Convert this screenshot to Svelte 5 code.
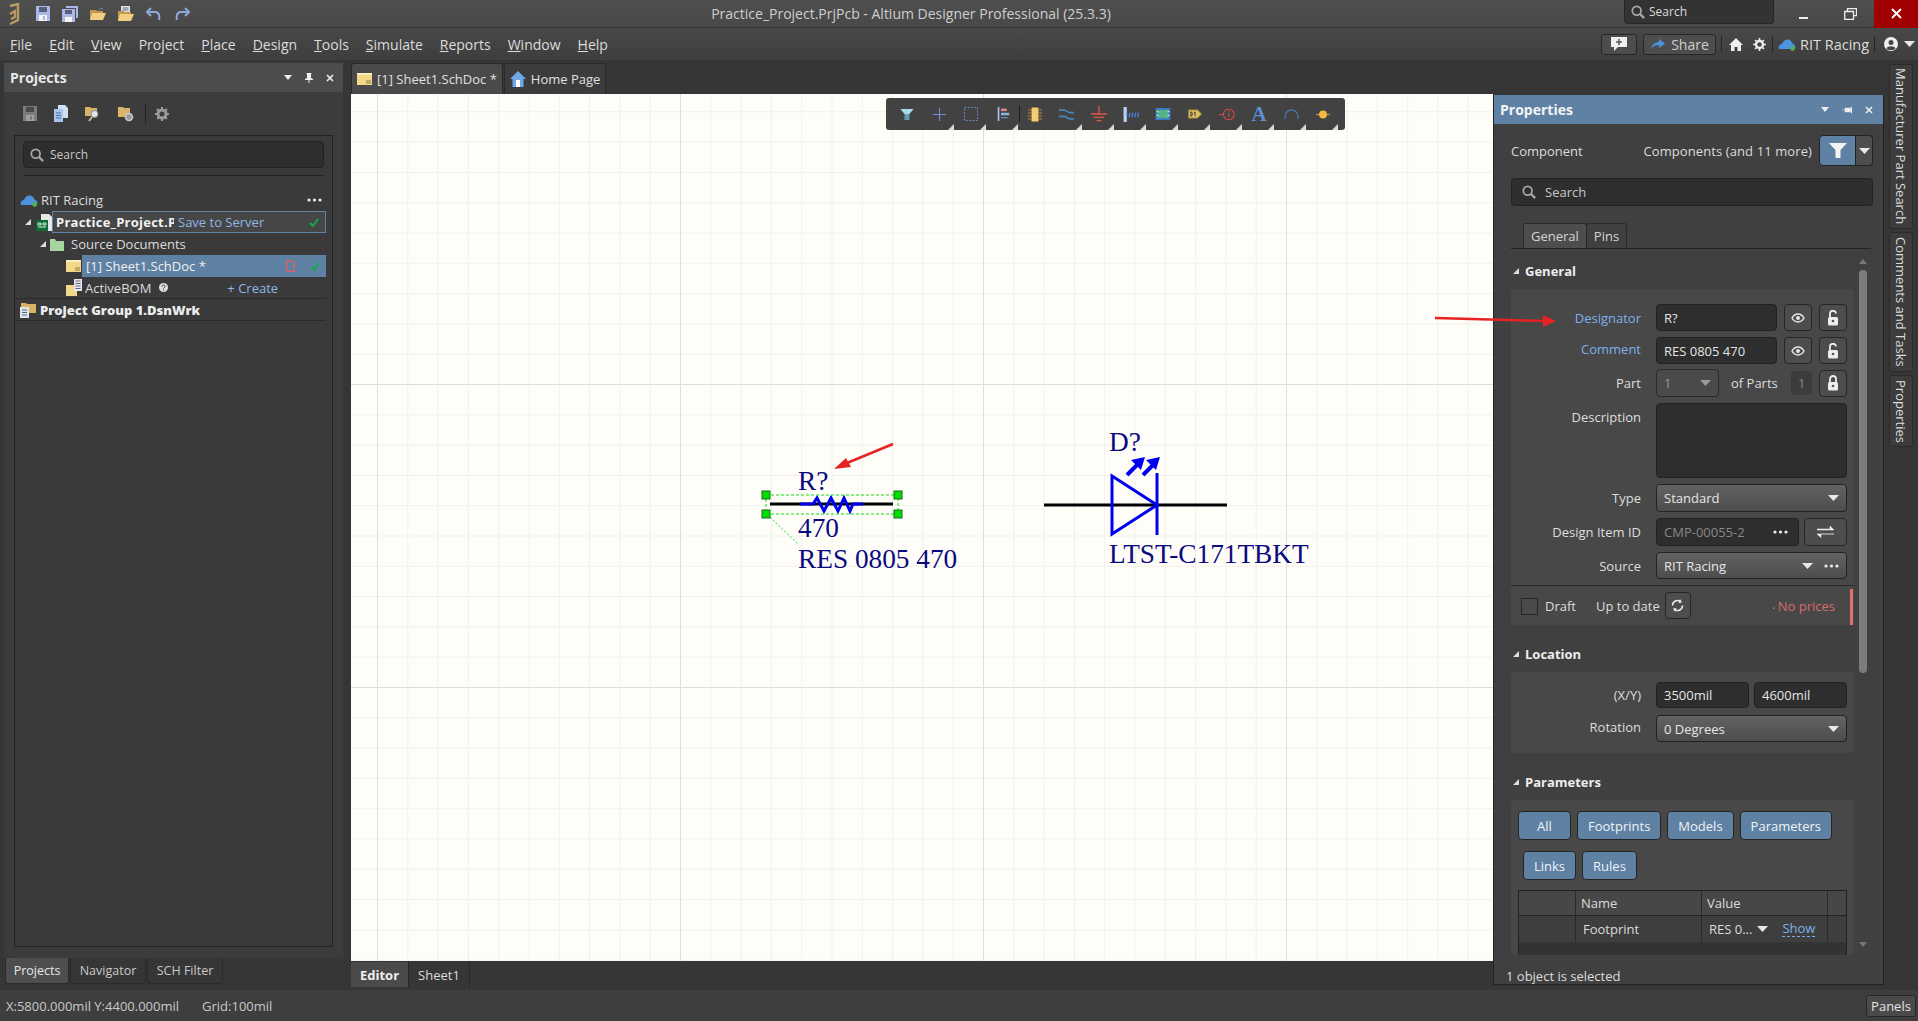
<script>
  const menus = [
    ["F", "ile"], ["E", "dit"], ["V", "iew"], ["", "Project"], ["P", "lace"], ["D", "esign"],
    ["T", "ools"], ["S", "imulate"], ["R", "eports"], ["W", "indow"], ["H", "elp"],
  ];
  const sideTabs = ["Manufacturer Part Search", "Comments and Tasks", "Properties"];
  const paramsRow1 = ["All", "Footprints", "Models", "Parameters"];
  const paramsRow2 = ["Links", "Rules"];
</script>

{#snippet caret()}
  <svg class="caret" width="11" height="6" viewBox="0 0 11 6"><path d="M0 0h11L5.5 6z" fill="#e8e8e8" /></svg>
{/snippet}

{#snippet tri()}
  <svg class="tri" width="6" height="6" viewBox="0 0 6 6"><path d="M0 6L6 0v6z" fill="#dcdcdc" /></svg>
{/snippet}

{#snippet check()}
  <svg width="10" height="9" viewBox="0 0 10 9"><path d="M1 5l3 3 5-7" fill="none" stroke="#12a84e" stroke-width="2" /></svg>
{/snippet}

{#snippet mag(size)}
  <svg width={size} height={size} viewBox="0 0 16 16"><circle cx="6.5" cy="6.5" r="5" fill="none" stroke="#a8a8a8" stroke-width="2" /><path d="M10 10l5 5" stroke="#a8a8a8" stroke-width="2.6" /></svg>
{/snippet}

{#snippet eye()}
  <svg width="14" height="10" viewBox="0 0 14 10"><path d="M1 5c3-5.300 9-5.300 12 0-3 5.300-9 5.300-12 0z" fill="none" stroke="#e6e6e6" stroke-width="1.500" /><circle cx="7" cy="5" r="2" fill="#e6e6e6" /></svg>
{/snippet}

{#snippet lock(open)}
  <svg width="12" height="16" viewBox="0 0 12 16">
    <path d={open ? "M3 7V4a3 3 0 0 1 6-.5" : "M3 7V4a3 3 0 0 1 6 0v3"} fill="none" stroke="#eee" stroke-width="1.800" />
    <rect x="1" y="7" width="10" height="8.500" rx="1.500" fill="#eee" /><circle cx="6" cy="11" r="1.300" fill="#555" />
  </svg>
{/snippet}

{#snippet dots()}
  <svg width="15" height="4" viewBox="0 0 15 4"><circle cx="2" cy="2" r="1.600" fill="#eee" /><circle cx="7.500" cy="2" r="1.600" fill="#eee" /><circle cx="13" cy="2" r="1.600" fill="#eee" /></svg>
{/snippet}

{#snippet cloud()}
  <svg width="18" height="14" viewBox="0 0 18 14"><path d="M1 12c-1-3 1-5 3-5 1-4 6-6 9-3 1 1 2 3 2 3 2 0 3 3 2 5z" fill="#4b93e0" /><circle cx="14.500" cy="11.500" r="2.400" fill="#4fb04f" /></svg>
{/snippet}

{#snippet schFile()}
  <svg width="15" height="12" viewBox="0 0 15 12"><rect width="15" height="12" fill="#f2d98a" /><rect width="15" height="2" fill="#fbeec0" /><path d="M9 8h5M9 10h5" stroke="#8d7a3d" /></svg>
{/snippet}

{#snippet floppy(color, fade, paper)}
  <svg width="14" height="15" viewBox="0 0 14 15"><path d="M0 0h14v15H0z" fill={color} /><rect x="3" y="1" width="8" height="5" fill={fade} /><rect x="3" y="9" width="8" height="6" fill={paper} /><rect x="7" y="10" width="2" height="4" fill={color} /></svg>
{/snippet}

{#snippet folder()}
  <svg width="16" height="14" viewBox="0 0 16 14"><path d="M0 3h6l1 1h6v9H0z" fill="#c49a4a" /><path d="M2 6h14l-3 7H0z" fill="#f0cf80" /><path d="M9 3c1-2 3-2 4-1" fill="none" stroke="#9fb8e0" stroke-dasharray="1.500 1" /></svg>
{/snippet}

<div class="app">
  <header class="titlebar">
    <div class="title-left">
      <svg class="logo" width="14" height="22" viewBox="0 0 14 22"><path d="M3 3l8-2v16l-8 4M3 11l5-3v6l-4 2" fill="none" stroke="#b59a62" stroke-width="2.400" /></svg>
      <span class="t-icon">{@render floppy("#a9b8e8", "#59607e", "#f4f4f4")}</span>
      <svg class="t-icon" width="16" height="16" viewBox="0 0 16 16"><path d="M4 0h12v12h-2V2H4z" fill="#a9b8e8" /><path d="M0 3h13v13H0z" fill="#a9b8e8" /><rect x="3" y="4" width="7" height="4" fill="#59607e" /><rect x="3" y="11" width="7" height="5" fill="#f4f4f4" /></svg>
      <span class="t-icon">{@render folder()}</span>
      <svg class="t-icon" width="16" height="16" viewBox="0 0 16 16"><path d="M3 0h9v9H3z" fill="#dfe5f0" /><path d="M4.500 2h6M4.500 4h6" stroke="#667" /><path d="M0 5h6l1 1h6v9H0z" fill="#c49a4a" /><path d="M2 8h14l-3 7H0z" fill="#f0cf80" /></svg>
      <svg class="t-icon" width="16" height="14" viewBox="0 0 16 14"><path d="M5 1L1 5l4 4M1 5h8c4 0 5 4 4 8" fill="none" stroke="#8fa9dc" stroke-width="2" /></svg>
      <svg class="t-icon" width="16" height="14" viewBox="0 0 16 14"><path d="M11 1l4 4-4 4M15 5H7c-4 0-5 4-4 8" fill="none" stroke="#8fa9dc" stroke-width="2" /></svg>
    </div>
    <div class="title-text">Practice_Project.PrjPcb - Altium Designer Professional (25.3.3)</div>
    <div class="title-search">{@render mag(14)}<span>Search</span></div>
    <div class="win-btn"><svg width="10" height="10" viewBox="0 0 10 10"><rect y="8" width="9" height="2" fill="#eee" /></svg></div>
    <div class="win-btn"><svg width="13" height="12" viewBox="0 0 13 12"><path d="M3.500 3V.7h9v7H9.500M.7 3.500h8.800v7.800H.7z" fill="none" stroke="#eee" stroke-width="1.300" /></svg></div>
    <div class="win-btn close"><svg width="11" height="11" viewBox="0 0 11 11"><path d="M1 1l9 9M10 1l-9 9" stroke="#fff" stroke-width="1.800" /></svg></div>
  </header>

  <nav class="menubar">
    <div class="menus">
      {#each menus as [u, rest]}
        <span class="menu-item"><u>{u}</u>{rest}</span>
      {/each}
    </div>
    <div class="menu-right">
      <button class="mini msg"><svg width="16" height="14" viewBox="0 0 16 14"><path d="M0 0h16v10H7l-4 4v-4H0z" fill="#f0f0f0" /><path d="M8 2v6M5 5h6" stroke="#555" stroke-width="1.500" /></svg></button>
      <button class="mini share"><svg width="16" height="11" viewBox="0 0 16 11"><path d="M9 0l6 4.500L9 9V6C5 6 3 7 1 10c1-4 3-6.500 8-7z" fill="#4b93e0" /></svg>Share</button>
      <i class="vsep"></i>
      <svg class="home" width="14" height="13" viewBox="0 0 14 13"><path d="M7 0l7 7h-2v6H8.500V9h-3v4H2V7H0z" fill="#f0f0f0" /></svg>
      <svg class="gear" width="13" height="13" viewBox="0 0 13 13"><circle cx="6.500" cy="6.500" r="3.500" fill="none" stroke="#eee" stroke-width="2.400" /><path d="M6.500 0v13M0 6.500h13M2 2l9 9M11 2l-9 9" stroke="#eee" stroke-width="1.600" stroke-dasharray="2.200 8.600 2.200" /></svg>
      <i class="vsep"></i>
      <span class="cloud-top">{@render cloud()}</span>
      <span class="rit">RIT Racing</span>
      <i class="vsep"></i>
      <svg class="user" width="14" height="14" viewBox="0 0 14 14"><circle cx="7" cy="7" r="7" fill="#eee" /><circle cx="7" cy="5.500" r="2.500" fill="#444" /><path d="M2.500 11.500c1-3 8-3 9 0-2 2-7 2-9 0z" fill="#444" /></svg>
      {@render caret()}
    </div>
  </nav>

  <div class="main">
    <aside class="left">
      <div class="panel-head">
        <b>Projects</b>
        <span class="head-icons">
          <svg width="8" height="5" viewBox="0 0 8 5"><path d="M0 0h8L4 5z" fill="#eee" /></svg>
          <svg width="8" height="10" viewBox="0 0 8 10"><path d="M1.500 0h5v1H6v4l2 1v1H4.500v3h-1V7H0V6l2-1V1h-.5z" fill="#eee" /></svg>
          <svg width="8" height="8" viewBox="0 0 8 8"><path d="M1 1l6 6M7 1L1 7" stroke="#eee" stroke-width="1.600" /></svg>
        </span>
      </div>
      <div class="panel-tools">
        {@render floppy("#7c7c7c", "#4a4a4a", "#a0a0a0")}
        <svg width="14" height="17" viewBox="0 0 14 17"><path d="M4 0h7l3 3v10H4z" fill="#cfe0f5" /><path d="M0 4h9v13H0z" fill="#a9c4ea" /><path d="M2 8h5M2 10.500h5M2 13h5" stroke="#3d6aa8" /></svg>
        <svg width="16" height="16" viewBox="0 0 16 16"><path d="M0 1h5l1 1h6v8H0z" fill="#d9b368" /><circle cx="9.500" cy="8" r="3.500" fill="#dfe5ea" stroke="#888" /><path d="M7 11l-3 4" stroke="#c9b48a" stroke-width="2" /></svg>
        <svg width="16" height="16" viewBox="0 0 16 16"><path d="M0 1h5l1 1h6v9H0z" fill="#d9b368" /><circle cx="11" cy="11" r="3.500" fill="#999" stroke="#ccc" stroke-width="1.500" /></svg>
        <i class="tool-sep"></i>
        <svg width="14" height="14" viewBox="0 0 14 14"><circle cx="7" cy="7" r="4" fill="none" stroke="#9a9a9a" stroke-width="3" /><path d="M7 0v14M0 7h14M2 2l10 10M12 2L2 12" stroke="#9a9a9a" stroke-width="2" stroke-dasharray="2 10 2" /></svg>
      </div>
      <div class="tree-box">
        <div class="search left-search">{@render mag(14)}<span>Search</span></div>
        <div class="tree-sep"></div>
        <div class="row rit-row">
          {@render cloud()}
          <span class="row-text">RIT Racing</span>
          <span class="row-end">{@render dots()}</span>
        </div>
        <div class="row proj-row">
          <svg class="exp" width="6" height="6" viewBox="0 0 6 6"><path d="M0 6L6 0v6z" fill="#ddd" /></svg>
          <svg class="proj-icon" width="16" height="17" viewBox="0 0 16 17"><path d="M5 0h8l3 3v14H5z" fill="#e8e8e8" /><rect y="6" width="12" height="11" fill="#0d6b3a" /><path d="M2 9h3v2H2zM7 9h3v2H7zM2 13h8" stroke="#d8f0d8" fill="none" /></svg>
          <div class="proj-box">
            <b class="proj-name">Practice_Project.PrjPcb</b>
            <span class="save">Save to Server</span>
            <span class="row-end">{@render check()}</span>
          </div>
        </div>
        <div class="row src-row">
          <svg class="exp" width="6" height="6" viewBox="0 0 6 6"><path d="M0 6L6 0v6z" fill="#ddd" /></svg>
          <svg width="14" height="13" viewBox="0 0 14 13"><path d="M0 1h5l1 2h8v10H0z" fill="#a8d4a0" /></svg>
          <span class="row-text">Source Documents</span>
        </div>
        <div class="row sheet-row">
          {@render schFile()}
          <div class="sheet-box">
            <span>[1] Sheet1.SchDoc *</span>
            <svg class="red-doc" width="9" height="12" viewBox="0 0 9 12"><path d="M.7.700h5l2.600 2.600v8H.7z" fill="none" stroke="#e06060" stroke-width="1.300" /></svg>
            <span class="row-end">{@render check()}</span>
          </div>
        </div>
        <div class="row bom-row">
          <svg width="16" height="17" viewBox="0 0 16 17"><rect y="6" width="11" height="11" fill="#f2d98a" /><rect x="8" width="8" height="12" fill="#e8e8f4" /><path d="M9.500 2h5M9.500 4.500h5M9.500 7h5M9.500 9.500h5" stroke="#667" /></svg>
          <span class="row-text">ActiveBOM</span>
          <svg class="help" width="9" height="9" viewBox="0 0 9 9"><circle cx="4.500" cy="4.500" r="4.500" fill="#ddd" /><path d="M3 3.500c0-2 3-2 3 0 0 1-1.500 1-1.500 2M4.500 6.500v1" stroke="#333" fill="none" /></svg>
          <span class="create">+ Create</span>
        </div>
        <div class="row group-row">
          <svg width="17" height="17" viewBox="0 0 17 17"><path d="M1 2h5l1 1h9v9H1z" fill="#d9b368" /><rect y="6" width="9" height="11" fill="#dfe6ee" /><path d="M2 9h5M2 11.500h5M2 14h5" stroke="#567" /></svg>
          <b class="row-text">Project Group 1.DsnWrk</b>
        </div>
      </div>
      <div class="left-tabs">
        <span class="ltab on">Projects</span>
        <span class="ltab">Navigator</span>
        <span class="ltab">SCH Filter</span>
      </div>
    </aside>

    <section class="editor">
      <div class="doc-tabs">
        <span class="doc-tab first">{@render schFile()}[1] Sheet1.SchDoc *</span>
        <span class="doc-tab">
          <svg width="16" height="16" viewBox="0 0 16 16"><path d="M8 0l8 8h-2.500v8h-11V8H0z" fill="#6fa8e8" /><rect x="6" y="9" width="4" height="7" fill="#fff" /></svg>
          Home Page
        </span>
      </div>

      <div class="canvas">
        <svg class="sheet" width="1142" height="867" viewBox="351 94 1142 867">
          <defs>
            <pattern id="minor" patternUnits="userSpaceOnUse" x="377" y="81" width="30.3" height="30.3">
              <path d="M.5 0v30.300M0 .5h30.300" stroke="#f1f0ea" fill="none" />
            </pattern>
            <pattern id="major" patternUnits="userSpaceOnUse" x="377" y="81" width="303" height="303">
              <path d="M.5 0v303M0 .5h303" stroke="#dfded8" fill="none" />
            </pattern>
          </defs>
          <rect x="351" y="94" width="1142" height="867" fill="#fffdf8" />
          <rect x="351" y="94" width="1142" height="867" fill="url(#minor)" />
          <rect x="351" y="94" width="1142" height="867" fill="url(#major)" />

          <path d="M770 504h123" stroke="#000" stroke-width="3" />
          <path d="M800 504h13l4-6 7 13 7-13 7 13 6-13 6 13 3-7h10" fill="none" stroke="#0000f0" stroke-width="3" />
          <rect x="766" y="495" width="132" height="19" fill="none" stroke="#11dd11" stroke-dasharray="3 2" />
          <path d="M770 517l29 28" stroke="#11dd11" stroke-dasharray="2 2" />
          <g fill="#00e000" stroke="#1a6a1a">
            <rect x="762" y="491" width="8" height="8" />
            <rect x="894" y="491" width="8" height="8" />
            <rect x="762" y="510" width="8" height="8" />
            <rect x="894" y="510" width="8" height="8" />
          </g>
          <g class="sch-text">
            <text x="798" y="490">R?</text>
            <text x="798" y="537">470</text>
            <text x="798" y="568">RES 0805 470</text>
            <text x="1109" y="451">D?</text>
            <text x="1109" y="563">LTST-C171TBKT</text>
          </g>
          <path d="M1044 505h113M1157 505h70" stroke="#000" stroke-width="3" />
          <path d="M1112 476v58l45-29zM1157 473v62" fill="none" stroke="#0000f0" stroke-width="3" />
          <path d="M1127 475l11-11M1143 475l11-11" stroke="#0000f0" stroke-width="4" />
          <path d="M1145 457l-14 3 10 10zM1160 457l-14 3 10 10z" fill="#0000f0" />
          <path d="M893 444l-46 19" stroke="#e62222" stroke-width="2.500" />
          <path d="M834 469l12-11 5 9z" fill="#e62222" />
        </svg>

        <div class="sch-tools">
          <span class="st">
            <svg width="14" height="11" viewBox="0 0 18 15"><path d="M0 0h18l-6 7v8H6V7z" fill="#a8dce8" /><path d="M6 7h6v8H6z" fill="#5e9fb0" /></svg>
          </span>
          <span class="st">
            <svg width="13" height="13" viewBox="0 0 18 18"><path d="M9 0v18M0 9h18" stroke="#6f8fcf" stroke-width="1.500" /></svg>{@render tri()}
          </span>
          <span class="st">
            <svg width="14" height="14" viewBox="0 0 15 15"><rect x=".5" y=".5" width="14" height="14" fill="none" stroke="#6f8fe0" stroke-dasharray="2 1.500" /></svg>{@render tri()}
          </span>
          <span class="st">
            <svg width="13" height="14" viewBox="0 0 14 17"><rect width="2" height="17" fill="#aac4ee" /><rect x="4" y="2" width="7" height="3" fill="#e68a8a" /><rect x="4" y="7" width="10" height="3" fill="#8ab4e6" /><path d="M4 13h8" stroke="#8ab4e6" /></svg>{@render tri()}
          </span>
          <i class="st-sep"></i>
          <span class="st">
            <svg width="14" height="15" viewBox="0 0 14 15"><path d="M0 3h14M0 6h14M0 9h14M0 12h14" stroke="#b08c42" stroke-width="1.200" /><rect x="3.500" y=".5" width="7" height="14" rx="1" fill="#f2cd74" stroke="#a8853e" /></svg>
          </span>
          <span class="st">
            <svg width="16" height="11" viewBox="0 0 18 12"><path d="M0 1h6l6 3h5M0 8h6l6 3h5" fill="none" stroke="#4a84ba" stroke-width="2" /></svg>{@render tri()}
          </span>
          <span class="st">
            <svg width="16" height="16" viewBox="0 0 17 17"><path d="M8.500 0v8M0 8.500h17M3 12h11M6 15.500h5" stroke="#e0544a" stroke-width="1.400" /></svg>{@render tri()}
          </span>
          <span class="st">
            <svg width="17" height="15" viewBox="0 0 17 16"><rect width="3.500" height="16" fill="#b7cff2" /><path d="M3 8h2M7 6l-1 5M10 6l-1 5M13 6l-1 5M16 6l-1 5" stroke="#4a7cd0" stroke-width="1.500" /></svg>{@render tri()}
          </span>
          <span class="st">
            <svg width="16" height="12" viewBox="0 0 16 13"><rect width="16" height="13" fill="#3f78c8" /><rect x="2" y="2" width="12" height="9" fill="#52b488" /><path d="M1 4h2M1 8h2M13 4h2M13 8h2" stroke="#fff" /></svg>{@render tri()}
          </span>
          <span class="st">
            <svg width="16" height="10" viewBox="0 0 16 12"><path d="M0 1h11l5 5-5 5H0z" fill="#d9bd64" stroke="#8a7433" /><path d="M3 3.500v5c2.500 0 2.500-5 0-5zM7 4.500l1-1v5" fill="none" stroke="#222" /></svg>{@render tri()}
          </span>
          <span class="st">
            <svg width="16" height="13" viewBox="0 0 18 14"><circle cx="11" cy="7" r="6" fill="none" stroke="#dc4a4a" stroke-width="1.200" /><path d="M0 7h5M11 5v5M11 3v1" stroke="#dc4a4a" stroke-width="1.200" /></svg>{@render tri()}
          </span>
          <span class="st"><span class="big-a">A</span>{@render tri()}</span>
          <span class="st">
            <svg width="15" height="10" viewBox="0 0 16 11"><path d="M1 11V8a7 7 0 0 1 14 0v3" fill="none" stroke="#4a7cb8" stroke-width="1.300" /></svg>{@render tri()}
          </span>
          <span class="st">
            <svg width="14" height="9" viewBox="0 0 16 10"><path d="M0 5h16" stroke="#c88a4a" stroke-width="1.500" /><circle cx="8" cy="5" r="4.500" fill="#f4b93e" /></svg>{@render tri()}
          </span>
        </div>
      </div>

      <div class="view-tabs">
        <span class="vtab on">Editor</span>
        <span class="vtab">Sheet1</span>
      </div>
    </section>

    <aside class="props">
      <div class="props-head">
        <b>Properties</b>
        <span class="head-icons">
          <svg width="8" height="5" viewBox="0 0 8 5"><path d="M0 0h8L4 5z" fill="#eee" /></svg>
          <svg width="10" height="8" viewBox="0 0 10 8"><path d="M0 4h3M3 2h5v1h1V1h1v6H9V5H8v1H3z" fill="#eee" stroke="#eee" stroke-width=".5" /></svg>
          <svg width="8" height="8" viewBox="0 0 8 8"><path d="M1 1l6 6M7 1L1 7" stroke="#eee" stroke-width="1.600" /></svg>
        </span>
      </div>

      <div class="props-body">
        <div class="comp-row">
          <span>Component</span>
          <span class="comp-more">Components (and 11 more)</span>
          <button class="filter-btn"><svg width="18" height="15" viewBox="0 0 18 15"><path d="M0 0h18l-6.500 7v8h-5V7z" fill="#f4f4f4" /></svg></button>
          <button class="filter-drop">{@render caret()}</button>
        </div>
        <div class="search props-search">{@render mag(14)}<span>Search</span></div>
        <div class="p-tabs">
          <span class="p-tab on">General</span>
          <span class="p-tab">Pins</span>
        </div>

        <div class="scroll-wrap">
          <div class="scroll-content">
            <div class="sec-head">
              <svg width="6" height="6" viewBox="0 0 6 6"><path d="M0 6L6 0v6z" fill="#ddd" /></svg>
              <b>General</b>
            </div>
            <div class="sec-box general">
              <div class="f-row h27">
                <label class="lnk">Designator</label>
                <div class="ctl"><span class="input grow">R?</span><button class="sq">{@render eye()}</button><button class="sq">{@render lock(true)}</button></div>
              </div>
              <div class="f-row h26">
                <label class="lnk raised">Comment</label>
                <div class="ctl"><span class="input grow">RES 0805 470</span><button class="sq">{@render eye()}</button><button class="sq">{@render lock(true)}</button></div>
              </div>
              <div class="f-row h28">
                <label>Part</label>
                <div class="ctl">
                  <span class="select part dis">1 <svg width="11" height="6" viewBox="0 0 11 6"><path d="M0 0h11L5.500 6z" fill="#999" /></svg></span>
                  <span class="of">of Parts</span>
                  <span class="input small dis">1</span>
                  <button class="sq">{@render lock(false)}</button>
                </div>
              </div>
              <div class="f-row desc">
                <label class="top">Description</label>
                <div class="input full"></div>
              </div>
              <div class="f-row h28">
                <label>Type</label>
                <span class="select full">Standard {@render caret()}</span>
              </div>
              <div class="f-row h28">
                <label>Design Item ID</label>
                <div class="ctl">
                  <span class="input grow item dis">CMP-00055-2 <span class="light-dots">{@render dots()}</span></span>
                  <button class="sq wide"><svg width="17" height="14" viewBox="0 0 17 14"><path d="M0 4h13V1l4 4H0zM17 9H4v3.500L0 9h17z" fill="#eee" stroke="#eee" stroke-width=".5" /></svg></button>
                </div>
              </div>
              <div class="f-row h27">
                <label>Source</label>
                <span class="select full">RIT Racing <span class="src-right">{@render caret()}{@render dots()}</span></span>
              </div>
              <div class="draft">
                <i class="checkbox"></i>
                <span>Draft</span>
                <span class="uptodate">Up to date</span>
                <button class="sq refresh"><svg width="13" height="13" viewBox="0 0 13 13"><path d="M1.500 6.500a5 5 0 0 1 8-4M11.500 6.500a5 5 0 0 1-8 4" fill="none" stroke="#eee" stroke-width="1.500" /><path d="M9 0l2 3.500-3.500.5zM4 13l-2-3.500 3.500-.5z" fill="#eee" /></svg></button>
                <span class="prices"><small>▪</small> No prices</span>
              </div>
            </div>

            <div class="sec-head gap">
              <svg width="6" height="6" viewBox="0 0 6 6"><path d="M0 6L6 0v6z" fill="#ddd" /></svg>
              <b>Location</b>
            </div>
            <div class="sec-box location">
              <div class="f-row h26">
                <label>(X/Y)</label>
                <div class="ctl"><span class="input half">3500mil</span><span class="input half">4600mil</span></div>
              </div>
              <div class="f-row h27">
                <label class="raised">Rotation</label>
                <span class="select full">0 Degrees {@render caret()}</span>
              </div>
            </div>

            <div class="sec-head gap">
              <svg width="6" height="6" viewBox="0 0 6 6"><path d="M0 6L6 0v6z" fill="#ddd" /></svg>
              <b>Parameters</b>
            </div>
            <div class="sec-box params">
              <div class="chips first-chips">
                {#each paramsRow1 as c}<button class="chip">{c}</button>{/each}
              </div>
              <div class="chips second-chips">
                {#each paramsRow2 as c}<button class="chip">{c}</button>{/each}
              </div>
              <div class="p-table">
                <div class="p-thead">
                  <span class="cell c1"></span><span class="cell c2">Name</span><span class="cell c3">Value</span><span class="cell c4"></span>
                </div>
                <div class="p-trow">
                  <span class="cell c1"></span><span class="cell c2 pad">Footprint</span>
                  <span class="cell c3 pad val">RES 0... {@render caret()}<a class="show">Show</a></span>
                  <span class="cell c4"></span>
                </div>
              </div>
            </div>
          </div>

          <div class="scrollbar">
            <svg width="8" height="5" viewBox="0 0 8 5"><path d="M0 5h8L4 0z" fill="#777" /></svg>
            <div class="thumb"></div>
            <svg class="sb-down" width="8" height="5" viewBox="0 0 8 5"><path d="M0 0h8L4 5z" fill="#777" /></svg>
          </div>
        </div>
      </div>
      <div class="props-foot">1 object is selected</div>
    </aside>

    <div class="side-tabs">
      {#each sideTabs as t}
        <span class="side-tab">{t}</span>
      {/each}
    </div>
  </div>

  <footer class="statusbar">
    <span class="coords">X:5800.000mil Y:4400.000mil</span>
    <span class="grid-info">Grid:100mil</span>
    <button class="panels">Panels</button>
  </footer>

  <svg class="red-arrow" width="125" height="12" viewBox="0 0 125 12"><path d="M0 3l112 3" stroke="#e62222" stroke-width="2.500" /><path d="M108 0l13 6-13 6z" fill="#e62222" /></svg>
</div>

<style>
  :global(body) {
    margin: 0;
    background: #3a3a3a;
  }
  .app {
    position: relative;
    width: 1918px;
    height: 1021px;
    display: flex;
    flex-direction: column;
    overflow: hidden;
    font-family: "Open Sans", "Noto Sans", sans-serif;
    font-size: 13px;
    color: #dcdcdc;
    background: #363636;
  }
  button {
    font: inherit;
    color: inherit;
    padding: 0;
  }
  svg {
    display: block;
    flex: none;
  }

  .titlebar {
    height: 28px;
    flex: none;
    display: flex;
    align-items: center;
    background: linear-gradient(#4f4f4f, #484848);
    border-bottom: 1px solid #333;
    box-sizing: border-box;
    position: relative;
  }
  .title-left {
    display: flex;
    align-items: center;
    width: 400px;
    padding-left: 7px;
    box-sizing: border-box;
  }
  .t-icon {
    display: block;
    margin-left: 12px;
  }
  .logo {
    margin-right: 3px;
  }
  .title-text {
    width: 1020px;
    text-align: center;
    font-size: 14px;
    padding-left: 2px;
    box-sizing: border-box;
    color: #cfcfcf;
  }
  .title-search {
    margin-left: 204px;
    margin-right: 6px;
    width: 150px;
    height: 24px;
    align-self: flex-start;
    box-sizing: border-box;
    display: flex;
    align-items: center;
    gap: 4px;
    padding-left: 6px;
    background: #333;
    border: 1px solid #262626;
    border-top: none;
    border-radius: 0 0 4px 4px;
    font-size: 12px;
  }
  .win-btn {
    width: 47px;
    height: 28px;
    flex: none;
    display: flex;
    align-items: center;
    justify-content: center;
  }
  .close {
    width: 44px;
    background: #a00000;
  }

  .menubar {
    height: 32px;
    flex: none;
    display: flex;
    align-items: center;
    background: linear-gradient(#484848, #3e3e3e);
  }
  .menus {
    display: flex;
    padding-left: 10px;
    gap: 17px;
    font-size: 14px;
  }
  .menu-item u {
    text-decoration: underline;
  }
  .menu-right {
    margin-left: auto;
    display: flex;
    align-items: center;
    padding-right: 3px;
  }
  .mini {
    height: 21px;
    box-sizing: border-box;
    background: #4d4d4d;
    border: 1px solid #262626;
    border-radius: 3px;
    display: flex;
    align-items: center;
    justify-content: center;
  }
  .msg {
    width: 36px;
  }
  .share {
    width: 73px;
    margin-left: 6px;
    gap: 5px;
    font-size: 14px;
    color: #cfcfcf;
  }
  .vsep {
    width: 1px;
    height: 16px;
    background: #262626;
  }
  .menu-right .share + .vsep {
    margin-left: 5px;
  }
  .home {
    margin-left: 7px;
  }
  .gear {
    margin-left: 10px;
    margin-right: 6px;
  }
  .cloud-top {
    margin-left: 5px;
    margin-right: 4px;
  }
  .rit {
    font-size: 14.5px;
    width: 70px;
    margin-right: 4px;
    white-space: nowrap;
  }
  .user {
    margin-left: 9px;
    margin-right: 6px;
  }

  .main {
    flex: 1;
    display: flex;
    min-height: 0;
  }

  .left {
    width: 339px;
    margin-left: 4px;
    padding-top: 3px;
    display: flex;
    flex-direction: column;
    flex: none;
    box-sizing: border-box;
    height: 924px;
  }
  .panel-head {
    height: 29px;
    flex: none;
    background: #4c4c4c;
    display: flex;
    align-items: center;
    padding: 0 9px 0 6px;
    font-size: 14px;
    color: #e8e8e8;
  }
  .head-icons {
    margin-left: auto;
    display: flex;
    align-items: center;
    gap: 13px;
  }
  .panel-tools {
    background: #3c3c3c;
    height: 43px;
    flex: none;
    display: flex;
    align-items: center;
    gap: 17px;
    padding: 0 0 0 19px;
    box-sizing: border-box;
  }
  .tool-sep {
    width: 1px;
    height: 20px;
    background: #222;
    margin: 0 -8px 0 -6px;
  }
  .tree-box {
    flex: none;
    height: 812px;
    margin: 0 10px 11px;
    border: 1px solid #222;
    box-sizing: border-box;
    background: #3a3a3a;
    padding-top: 5px;
    box-shadow: 0 0 0 10px #3c3c3c, 0 11px 0 0 #3c3c3c;
  }
  .search {
    display: flex;
    align-items: center;
    box-sizing: border-box;
    background: #2e2e2e;
    border: 1px solid #222;
    border-radius: 4px;
    font-size: 12px;
    color: #c8c8c8;
  }
  .left-search {
    height: 27px;
    margin: 0 8px;
    padding-left: 6px;
    gap: 6px;
  }
  .tree-sep {
    height: 1px;
    background: #222;
    margin: 7px 8px 13px;
  }
  .row {
    display: flex;
    align-items: center;
    height: 22px;
    box-sizing: border-box;
    font-size: 13px;
    position: relative;
    white-space: nowrap;
    margin-right: 6px;
  }
  .row-end {
    margin-left: auto;
    padding-right: 6px;
    display: flex;
    align-items: center;
  }
  .row-text {
    margin-left: 3px;
  }
  .rit-row {
    padding-left: 5px;
  }
  .rit-row .row-end {
    padding-right: 4px;
  }
  .exp {
    flex: none;
  }
  .proj-row {
    padding-left: 10px;
  }
  .proj-icon {
    margin-left: 5px;
  }
  .proj-box {
    margin-left: 0;
    flex: 1;
    height: 22px;
    box-sizing: border-box;
    border: 1px solid #5f81a3;
    display: flex;
    align-items: center;
    background: #464646;
    padding-left: 3px;
    min-width: 0;
  }
  .proj-name {
    width: 118px;
    overflow: hidden;
    color: #f2f2f2;
    font-size: 13px;
    letter-spacing: 0.25px;
  }
  .save {
    margin-left: 4px;
    color: #8fb8e6;
  }
  .src-row {
    padding-left: 25px;
    gap: 4px;
  }
  .sheet-row {
    padding-left: 51px;
  }
  .sheet-box {
    margin-left: 1px;
    flex: 1;
    align-self: stretch;
    display: flex;
    align-items: center;
    background: #5f81a3;
    color: #f0f0f0;
    padding-left: 4px;
  }
  .red-doc {
    margin-left: auto;
    margin-right: 15px;
  }
  .sheet-box .row-end {
    margin-left: 0;
  }
  .bom-row {
    padding-left: 51px;
    border-bottom: 1px solid #2a2a2a;
  }
  .help {
    margin-left: 8px;
  }
  .create {
    margin-left: 59px;
    color: #8fb8e6;
  }
  .group-row {
    padding-left: 5px;
    font-weight: bold;
    border-bottom: 1px solid #2a2a2a;
    color: #ececec;
  }
  .left-tabs {
    display: flex;
    height: 26px;
    flex: none;
    margin-left: 1px;
    font-size: 12.5px;
    position: relative;
  }
  .ltab {
    display: flex;
    align-items: center;
    justify-content: center;
    width: 76px;
    margin-right: 1px;
    box-sizing: border-box;
    border: 1px solid #2a2a2a;
    border-top: none;
    border-radius: 0 0 3px 3px;
    color: #c8c8c8;
  }
  .ltab.on {
    width: 64px;
    background: #4e4e4e;
    color: #e8e8e8;
  }

  .editor {
    width: 1142px;
    margin-left: 8px;
    flex: none;
    padding-top: 3px;
    box-sizing: border-box;
    display: flex;
    flex-direction: column;
    height: 926px;
  }
  .doc-tabs {
    display: flex;
    height: 31px;
    flex: none;
  }
  .doc-tab {
    display: flex;
    align-items: center;
    gap: 5px;
    padding: 0 5px 0 5px;
    background: #3c3c3c;
    border: 1px solid #2a2a2a;
    border-bottom: none;
    border-radius: 3px 3px 0 0;
    font-size: 13px;
    margin-right: 1px;
    color: #e0e0e0;
  }
  .doc-tab.first {
    background: #4a4a4a;
  }
  .canvas {
    position: relative;
    height: 867px;
    flex: none;
    overflow: hidden;
  }
  .sch-text {
    font-family: "Liberation Serif", serif;
    font-size: 27.3px;
    fill: #0a0a80;
  }
  .sch-tools {
    position: absolute;
    left: 535px;
    top: 4px;
    height: 32px;
    box-sizing: border-box;
    padding-left: 5px;
    width: 459px;
    background: #424242;
    border-radius: 3px;
    display: flex;
    align-items: center;
  }
  .st {
    width: 32px;
    height: 32px;
    position: relative;
    display: flex;
    align-items: center;
    justify-content: center;
    flex: none;
  }
  .tri {
    position: absolute;
    right: 1px;
    bottom: 0;
  }
  .st-sep {
    width: 1px;
    height: 16px;
    background: #1e1e1e;
    margin: 0 -1px 0 0;
  }
  .big-a {
    font-family: "Liberation Serif", serif;
    font-weight: bold;
    font-size: 21px;
    color: #5b8fd8;
    line-height: 1;
  }
  .view-tabs {
    display: flex;
    height: 25px;
    margin-top: 1px;
    flex: none;
    font-size: 13px;
  }
  .vtab {
    display: flex;
    align-items: center;
    padding: 0 9px;
    border-right: 1px solid #262626;
  }
  .vtab.on {
    background: #4a4a4a;
    font-weight: bold;
    color: #efefef;
  }

  .props {
    width: 391px;
    height: 890px;
    margin-top: 35px;
    flex: none;
    box-sizing: border-box;
    border: 1px solid #222;
    border-top: none;
    background: #404040;
    display: flex;
    flex-direction: column;
  }
  .props-head {
    height: 29px;
    flex: none;
    background: #5f81a3;
    display: flex;
    align-items: center;
    padding: 0 10px 0 6px;
    font-size: 14px;
    color: #f4f4f4;
  }
  .props-body {
    height: 831px;
    flex: none;
    padding: 11px 10px 0 17px;
    box-sizing: border-box;
    display: flex;
    flex-direction: column;
  }
  .comp-row {
    display: flex;
    align-items: center;
    height: 31px;
    flex: none;
    margin-bottom: 12px;
  }
  .comp-more {
    margin-left: auto;
    margin-right: 7px;
    letter-spacing: 0.1px;
  }
  .filter-btn {
    width: 37px;
    height: 31px;
    background: #5f81a3;
    border: 1px solid #222;
    border-radius: 4px 0 0 4px;
    display: flex;
    align-items: center;
    justify-content: center;
  }
  .filter-drop {
    width: 17px;
    height: 31px;
    background: #4e4e4e;
    border: 1px solid #222;
    border-left: none;
    border-radius: 0 4px 4px 0;
    display: flex;
    align-items: center;
    justify-content: center;
  }
  .props-search {
    height: 28px;
    flex: none;
    margin-bottom: 17px;
    padding-left: 10px;
    gap: 9px;
    font-size: 13px;
  }
  .p-tabs {
    display: flex;
    height: 26px;
    flex: none;
    box-sizing: border-box;
    border-bottom: 1px solid #222;
    padding-left: 12px;
    margin-right: 2px;
  }
  .p-tab {
    display: flex;
    align-items: center;
    padding: 0 7px;
    border: 1px solid #2a2a2a;
    border-bottom: none;
    border-radius: 3px 3px 0 0;
    color: #d4d4d4;
  }
  .p-tab + .p-tab {
    margin-left: -1px;
  }
  .p-tab.on {
    background: #4d4d4d;
  }
  .scroll-wrap {
    flex: 1;
    min-height: 0;
    display: flex;
    overflow: hidden;
  }
  .scroll-content {
    width: 343px;
    flex: none;
    padding-top: 11px;
  }
  .sec-head {
    height: 22px;
    display: flex;
    align-items: center;
    gap: 6px;
    padding-left: 2px;
    margin-bottom: 7px;
    color: #ececec;
  }
  .sec-head.gap {
    margin-top: 18px;
  }
  .sec-box {
    background: #484848;
    border-radius: 4px;
  }
  .general {
    padding-top: 15px;
    display: flex;
    flex-direction: column;
    gap: 6px;
  }
  .f-row {
    display: grid;
    grid-template-columns: 130px 191px;
    column-gap: 15px;
    align-items: center;
  }
  .h26 { height: 26px; }
  .h27 { height: 27px; }
  .h28 { height: 28px; }
  .desc {
    height: 75px;
    align-items: start;
  }
  label {
    text-align: right;
    color: #dedede;
  }
  label.lnk {
    color: #7eb0e8;
  }
  label.top {
    padding-top: 5px;
  }
  label.raised {
    padding-bottom: 3px;
  }
  .ctl {
    display: flex;
    align-items: center;
    height: 100%;
    gap: 7px;
  }
  .input {
    display: flex;
    align-items: center;
    box-sizing: border-box;
    height: 100%;
    background: #2e2e2e;
    border: 1px solid #222;
    border-radius: 4px;
    padding-left: 7px;
    color: #e4e4e4;
  }
  .grow {
    flex: 1;
    min-width: 0;
  }
  .full {
    width: 191px;
  }
  .desc .input {
    height: 75px;
  }
  .half {
    width: 93px;
    flex: none;
  }
  .ctl:has(.half) {
    gap: 5px;
  }
  .dis {
    color: #888;
  }
  .sq {
    width: 28px;
    height: 27px;
    flex: none;
    box-sizing: border-box;
    background: #4d4d4d;
    border: 1px solid #262626;
    border-radius: 4px;
    display: flex;
    align-items: center;
    justify-content: center;
  }
  .wide {
    width: 43px;
    height: 28px;
    margin-left: -2px;
  }
  .select {
    display: flex;
    align-items: center;
    justify-content: space-between;
    height: 100%;
    box-sizing: border-box;
    background: linear-gradient(#636363, #4c4c4c);
    border: 1px solid #222;
    border-radius: 4px;
    padding: 0 7px;
    color: #e6e6e6;
  }
  .part {
    width: 63px;
    flex: none;
    background: #4a4a4a;
    border-color: #2a2a2a;
    color: #999;
  }
  .of {
    margin-left: 5px;
    width: 53px;
    white-space: nowrap;
  }
  .small {
    width: 21px;
    flex: none;
    padding-left: 6px;
    background: #3c3c3c;
    border-color: #3c3c3c;
    margin-left: 0;
    height: 24px;
  }
  .item {
    justify-content: space-between;
    padding-right: 10px;
    white-space: nowrap;
  }
  .src-right {
    display: flex;
    align-items: center;
    gap: 11px;
  }
  .draft {
    margin-top: 0;
    height: 40px;
    box-sizing: border-box;
    border-top: 1px solid #2a2a2a;
    display: flex;
    align-items: center;
    padding-left: 10px;
    position: relative;
  }
  .checkbox {
    width: 17px;
    height: 17px;
    box-sizing: border-box;
    border: 1px solid #262626;
    background: #4a4a4a;
    margin-right: 7px;
    margin-top: 1px;
  }
  .uptodate {
    margin-left: 20px;
  }
  .refresh {
    margin-left: 5px;
    width: 26px;
  }
  .prices {
    margin-left: auto;
    margin-right: 19px;
    color: #d86a6a;
  }
  .prices small {
    font-size: 6px;
    vertical-align: middle;
  }
  .draft::after {
    content: "";
    position: absolute;
    right: 1px;
    top: 3px;
    bottom: 0;
    width: 3px;
    background: #e07070;
  }
  .location {
    padding: 10px 0 11px;
    display: flex;
    flex-direction: column;
    gap: 7px;
  }
  .params {
    padding: 11px 0 0 7px;
    height: 155px;
    box-sizing: border-box;
    overflow: hidden;
  }
  .chips {
    display: flex;
    gap: 6px;
    height: 29px;
  }
  .second-chips {
    padding-left: 5px;
    margin-top: 11px;
    margin-bottom: 10px;
  }
  .chip {
    background: #5f81a3;
    border: 1px solid #242424;
    border-radius: 4px;
    color: #eef2f6;
    padding: 0 10px;
    min-width: 53px;
    box-sizing: border-box;
  }
  .p-table {
    width: 329px;
    box-sizing: border-box;
    border: 1px solid #222;
    border-bottom: none;
    background: #333;
    height: 65px;
  }
  .p-thead,
  .p-trow {
    display: grid;
    grid-template-columns: 57px 126px 126px 18px;
    align-items: center;
  }
  .p-thead {
    height: 25px;
    background: #474747;
    border-bottom: 1px solid #222;
    box-sizing: border-box;
  }
  .p-trow {
    height: 26px;
    background: #3e3e3e;
  }
  .cell {
    display: flex;
    align-items: center;
    height: 100%;
    padding-left: 5px;
    box-sizing: border-box;
    white-space: nowrap;
  }
  .c1, .c2, .c3 {
    border-right: 1px solid #2a2a2a;
  }
  .pad {
    padding-left: 7px;
  }
  .val {
    gap: 5px;
  }
  .show {
    color: #7eb0e8;
    border-bottom: 1px dashed #7eb0e8;
    margin-left: 9px;
    line-height: 15px;
  }
  .scrollbar {
    width: 8px;
    margin-left: 5px;
    padding-top: 10px;
    display: flex;
    flex-direction: column;
    align-items: center;
    height: 705px;
    box-sizing: border-box;
  }
  .thumb {
    width: 8px;
    height: 403px;
    margin-top: 6px;
    border-radius: 4px;
    background: #7c7c7c;
  }
  .sb-down {
    margin-top: auto;
    margin-bottom: 7px;
  }
  .props-foot {
    flex: 1;
    display: flex;
    align-items: center;
    padding-left: 12px;
    padding-top: 12px;
    box-sizing: border-box;
  }

  .side-tabs {
    margin-left: 5px;
    padding-top: 4px;
    display: flex;
    flex-direction: column;
    gap: 3px;
    width: 24px;
    flex: none;
  }
  .side-tab {
    writing-mode: vertical-rl;
    box-sizing: border-box;
    width: 24px;
    height: 165px;
    border: 1px solid #2a2a2a;
    border-radius: 3px;
    background: #3c3c3c;
    display: flex;
    align-items: center;
    justify-content: center;
    font-size: 13px;
    color: #dcdcdc;
    white-space: nowrap;
  }
  .side-tab:nth-child(2) {
    height: 140px;
  }
  .side-tab:nth-child(3) {
    height: 72px;
  }

  .statusbar {
    height: 31px;
    flex: none;
    display: flex;
    align-items: center;
    background: #3e3e3e;
    padding-left: 6px;
    font-size: 13px;
    color: #c8c8c8;
  }
  .grid-info {
    margin-left: 23px;
  }
  .panels {
    margin-left: auto;
    margin-right: 2px;
    width: 50px;
    height: 22px;
    background: #4a4a4a;
    border: 1px solid #262626;
    border-radius: 3px;
    color: #e4e4e4;
  }
  /* annotation drawn over the sheet and the properties panel */
  .red-arrow {
    position: absolute;
    left: 1435px;
    top: 315px;
  }
</style>
